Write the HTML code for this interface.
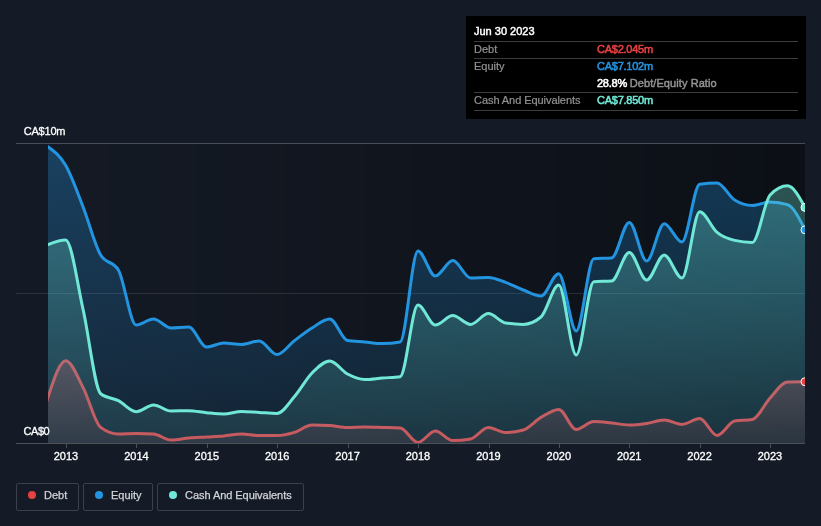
<!DOCTYPE html>
<html><head><meta charset="utf-8"><title>Debt to Equity History</title>
<style>
html,body{margin:0;padding:0;background:#151b26;}
body{width:821px;height:526px;position:relative;overflow:hidden;font-family:"Liberation Sans",Arial,sans-serif;font-size:11px;color:#fff;}
svg{position:absolute;left:0;top:0;will-change:transform;}
.tip,.legend{will-change:transform;}
.tip{position:absolute;left:466px;top:16px;width:324px;height:87px;padding:8px;background:#000;}
.tip .row{height:16px;line-height:17px;border-bottom:1px solid #3c3c3c;position:relative;white-space:nowrap;}
.tip .row.nb{border-bottom:none;height:17px;}
.tip .title{color:#fff;height:17px;line-height:18px;-webkit-text-stroke:0.45px #fff;}
.tip .title span{position:relative;top:-2px;}
.tip .lab{color:#939393;position:relative;top:-1px;-webkit-text-stroke:0.2px #939393;}
.tip .val{position:absolute;left:123px;top:-1px;letter-spacing:-0.25px;-webkit-text-stroke:0.55px;}
.legend{position:absolute;top:483px;height:26px;border:1px solid #3b404b;border-radius:2px;box-sizing:content-box;color:#d2d4d8;line-height:23px;white-space:nowrap;}
.legend i{position:absolute;left:11px;top:7px;width:8px;height:8px;border-radius:4px;}
.legend span{position:absolute;left:27px;top:0;-webkit-text-stroke:0.25px #d2d4d8;}
</style></head><body>
<svg width="821" height="526" viewBox="0 0 821 526">
<defs>
<linearGradient id="pbg" x1="0" y1="0" x2="1" y2="0"><stop offset="0" stop-color="#000" stop-opacity="0"/><stop offset="1" stop-color="#000" stop-opacity="0.42"/></linearGradient>
<linearGradient id="gd" x1="0" y1="0" x2="0" y2="1"><stop offset="0" stop-color="#e64141" stop-opacity="0.32"/><stop offset="1" stop-color="#e64141" stop-opacity="0.1"/></linearGradient>
<linearGradient id="ge" x1="0" y1="0" x2="0" y2="1"><stop offset="0" stop-color="#2394df" stop-opacity="0.32"/><stop offset="1" stop-color="#2394df" stop-opacity="0.1"/></linearGradient>
<linearGradient id="gc" x1="0" y1="0" x2="0" y2="1"><stop offset="0" stop-color="#71e7d6" stop-opacity="0.32"/><stop offset="1" stop-color="#71e7d6" stop-opacity="0.1"/></linearGradient>
<clipPath id="cp"><rect x="48" y="140" width="757" height="303"/></clipPath>
</defs>
<rect x="16" y="144" width="789" height="299" fill="url(#pbg)"/>
<g stroke="#fff" stroke-width="1" shape-rendering="crispEdges">
<line x1="16" y1="143.5" x2="805" y2="143.5" stroke-opacity="0.22"/>
<line x1="16" y1="293.5" x2="805" y2="293.5" stroke-opacity="0.11"/>
</g>
<g clip-path="url(#cp)">
<path d="M48.00,397.40C53.91,379.05,59.83,360.70,65.74,360.70C71.53,360.70,77.32,376.57,83.10,387.60C88.95,398.75,94.80,423.05,100.65,427.40C106.57,431.80,112.48,434.00,118.40,434.00C124.31,434.00,130.23,433.40,136.14,433.40C141.93,433.40,147.71,433.60,153.50,434.00C159.35,434.40,165.20,440.00,171.05,440.00C176.96,440.00,182.88,438.50,188.79,438.00C194.71,437.50,200.62,437.34,206.54,437.00C212.32,436.67,218.11,436.50,223.89,436.00C229.74,435.50,235.59,434.00,241.44,434.00C247.36,434.00,253.27,435.60,259.19,435.60C265.10,435.60,271.02,435.60,276.93,435.60C282.78,435.60,288.63,434.17,294.48,432.40C300.33,430.63,306.18,425.00,312.03,425.00C317.95,425.00,323.86,425.20,329.78,425.60C335.69,426.00,341.61,427.60,347.52,427.60C353.31,427.60,359.09,427.00,364.88,427.00C370.73,427.00,376.58,427.23,382.43,427.40C388.34,427.57,394.26,427.60,400.17,428.00C406.09,428.40,412.00,442.40,417.92,442.40C423.70,442.40,429.49,431.00,435.28,431.00C441.13,431.00,446.98,440.60,452.83,440.60C458.74,440.60,464.66,440.07,470.57,439.00C476.48,437.93,482.40,427.40,488.31,427.40C494.10,427.40,499.89,432.60,505.67,432.60C511.52,432.60,517.37,431.73,523.22,430.00C529.14,428.25,535.05,420.83,540.97,417.40C546.88,413.97,552.80,409.40,558.71,409.40C564.56,409.40,570.41,429.40,576.26,429.40C582.11,429.40,587.96,421.60,593.81,421.60C599.73,421.60,605.64,422.43,611.56,423.00C617.47,423.57,623.38,425.00,629.30,425.00C635.08,425.00,640.87,424.23,646.66,423.40C652.51,422.57,658.36,420.00,664.21,420.00C670.12,420.00,676.04,424.40,681.95,424.40C687.87,424.40,693.78,418.60,699.70,418.60C705.48,418.60,711.27,435.40,717.05,435.40C722.90,435.40,728.75,422.06,734.60,421.00C740.52,419.93,746.43,420.47,752.35,419.40C758.26,418.33,764.18,404.28,770.09,398.00C775.88,391.85,781.66,382.20,787.45,382.00C793.30,381.80,799.15,381.75,805.00,381.70L805.00,443L48.00,443Z" fill="url(#gd)"/>
<path d="M45.00,406.71 L48.00,397.40C53.91,379.05,59.83,360.70,65.74,360.70C71.53,360.70,77.32,376.57,83.10,387.60C88.95,398.75,94.80,423.05,100.65,427.40C106.57,431.80,112.48,434.00,118.40,434.00C124.31,434.00,130.23,433.40,136.14,433.40C141.93,433.40,147.71,433.60,153.50,434.00C159.35,434.40,165.20,440.00,171.05,440.00C176.96,440.00,182.88,438.50,188.79,438.00C194.71,437.50,200.62,437.34,206.54,437.00C212.32,436.67,218.11,436.50,223.89,436.00C229.74,435.50,235.59,434.00,241.44,434.00C247.36,434.00,253.27,435.60,259.19,435.60C265.10,435.60,271.02,435.60,276.93,435.60C282.78,435.60,288.63,434.17,294.48,432.40C300.33,430.63,306.18,425.00,312.03,425.00C317.95,425.00,323.86,425.20,329.78,425.60C335.69,426.00,341.61,427.60,347.52,427.60C353.31,427.60,359.09,427.00,364.88,427.00C370.73,427.00,376.58,427.23,382.43,427.40C388.34,427.57,394.26,427.60,400.17,428.00C406.09,428.40,412.00,442.40,417.92,442.40C423.70,442.40,429.49,431.00,435.28,431.00C441.13,431.00,446.98,440.60,452.83,440.60C458.74,440.60,464.66,440.07,470.57,439.00C476.48,437.93,482.40,427.40,488.31,427.40C494.10,427.40,499.89,432.60,505.67,432.60C511.52,432.60,517.37,431.73,523.22,430.00C529.14,428.25,535.05,420.83,540.97,417.40C546.88,413.97,552.80,409.40,558.71,409.40C564.56,409.40,570.41,429.40,576.26,429.40C582.11,429.40,587.96,421.60,593.81,421.60C599.73,421.60,605.64,422.43,611.56,423.00C617.47,423.57,623.38,425.00,629.30,425.00C635.08,425.00,640.87,424.23,646.66,423.40C652.51,422.57,658.36,420.00,664.21,420.00C670.12,420.00,676.04,424.40,681.95,424.40C687.87,424.40,693.78,418.60,699.70,418.60C705.48,418.60,711.27,435.40,717.05,435.40C722.90,435.40,728.75,422.06,734.60,421.00C740.52,419.93,746.43,420.47,752.35,419.40C758.26,418.33,764.18,404.28,770.09,398.00C775.88,391.85,781.66,382.20,787.45,382.00C793.30,381.80,799.15,381.75,805.00,381.70" fill="none" stroke="#e64141" stroke-width="3" stroke-linejoin="round"/>
<path d="M48.00,146.80C53.91,151.03,59.83,155.27,65.74,165.50C71.53,175.51,77.32,192.18,83.10,207.00C88.95,221.99,94.80,245.11,100.65,255.00C106.57,265.00,112.48,260.00,118.40,270.00C124.31,280.00,130.23,325.00,136.14,325.00C141.93,325.00,147.71,319.00,153.50,319.00C159.35,319.00,165.20,328.00,171.05,328.00C176.96,328.00,182.88,327.00,188.79,327.00C194.71,327.00,200.62,347.00,206.54,347.00C212.32,347.00,218.11,343.00,223.89,343.00C229.74,343.00,235.59,344.40,241.44,344.40C247.36,344.40,253.27,341.00,259.19,341.00C265.10,341.00,271.02,354.60,276.93,354.60C282.78,354.60,288.63,345.03,294.48,340.60C300.33,336.17,306.18,331.59,312.03,328.00C317.95,324.37,323.86,319.00,329.78,319.00C335.69,319.00,341.61,339.65,347.52,340.60C353.31,341.53,359.09,341.50,364.88,342.00C370.73,342.50,376.58,343.60,382.43,343.60C388.34,343.60,394.26,343.07,400.17,342.00C406.09,340.93,412.00,251.00,417.92,251.00C423.70,251.00,429.49,276.00,435.28,276.00C441.13,276.00,446.98,260.50,452.83,260.50C458.74,260.50,464.66,278.00,470.57,278.00C476.48,278.00,482.40,277.40,488.31,277.40C494.10,277.40,499.89,280.32,505.67,282.40C511.52,284.51,517.37,287.74,523.22,290.00C529.14,292.28,535.05,296.00,540.97,296.00C546.88,296.00,552.80,273.70,558.71,273.70C564.56,273.70,570.41,331.00,576.26,331.00C582.11,331.00,587.96,259.16,593.81,258.70C599.73,258.23,605.64,258.47,611.56,258.00C617.47,257.53,623.38,222.40,629.30,222.40C635.08,222.40,640.87,261.00,646.66,261.00C652.51,261.00,658.36,223.70,664.21,223.70C670.12,223.70,676.04,242.00,681.95,242.00C687.87,242.00,693.78,185.02,699.70,184.20C705.48,183.40,711.27,183.00,717.05,183.00C722.90,183.00,728.75,196.37,734.60,200.00C740.52,203.67,746.43,205.50,752.35,205.50C758.26,205.50,764.18,202.00,770.09,202.00C775.88,202.00,781.66,202.87,787.45,204.60C793.30,206.35,799.15,218.08,805.00,229.80L805.00,443L48.00,443Z" fill="url(#ge)"/>
<path d="M45.00,144.65 L48.00,146.80C53.91,151.03,59.83,155.27,65.74,165.50C71.53,175.51,77.32,192.18,83.10,207.00C88.95,221.99,94.80,245.11,100.65,255.00C106.57,265.00,112.48,260.00,118.40,270.00C124.31,280.00,130.23,325.00,136.14,325.00C141.93,325.00,147.71,319.00,153.50,319.00C159.35,319.00,165.20,328.00,171.05,328.00C176.96,328.00,182.88,327.00,188.79,327.00C194.71,327.00,200.62,347.00,206.54,347.00C212.32,347.00,218.11,343.00,223.89,343.00C229.74,343.00,235.59,344.40,241.44,344.40C247.36,344.40,253.27,341.00,259.19,341.00C265.10,341.00,271.02,354.60,276.93,354.60C282.78,354.60,288.63,345.03,294.48,340.60C300.33,336.17,306.18,331.59,312.03,328.00C317.95,324.37,323.86,319.00,329.78,319.00C335.69,319.00,341.61,339.65,347.52,340.60C353.31,341.53,359.09,341.50,364.88,342.00C370.73,342.50,376.58,343.60,382.43,343.60C388.34,343.60,394.26,343.07,400.17,342.00C406.09,340.93,412.00,251.00,417.92,251.00C423.70,251.00,429.49,276.00,435.28,276.00C441.13,276.00,446.98,260.50,452.83,260.50C458.74,260.50,464.66,278.00,470.57,278.00C476.48,278.00,482.40,277.40,488.31,277.40C494.10,277.40,499.89,280.32,505.67,282.40C511.52,284.51,517.37,287.74,523.22,290.00C529.14,292.28,535.05,296.00,540.97,296.00C546.88,296.00,552.80,273.70,558.71,273.70C564.56,273.70,570.41,331.00,576.26,331.00C582.11,331.00,587.96,259.16,593.81,258.70C599.73,258.23,605.64,258.47,611.56,258.00C617.47,257.53,623.38,222.40,629.30,222.40C635.08,222.40,640.87,261.00,646.66,261.00C652.51,261.00,658.36,223.70,664.21,223.70C670.12,223.70,676.04,242.00,681.95,242.00C687.87,242.00,693.78,185.02,699.70,184.20C705.48,183.40,711.27,183.00,717.05,183.00C722.90,183.00,728.75,196.37,734.60,200.00C740.52,203.67,746.43,205.50,752.35,205.50C758.26,205.50,764.18,202.00,770.09,202.00C775.88,202.00,781.66,202.87,787.45,204.60C793.30,206.35,799.15,218.08,805.00,229.80" fill="none" stroke="#2394df" stroke-width="3" stroke-linejoin="round"/>
<path d="M48.00,244.50C53.91,242.25,59.83,240.00,65.74,240.00C71.53,240.00,77.32,284.05,83.10,309.50C88.95,335.23,94.80,389.08,100.65,393.70C106.57,398.37,112.48,397.70,118.40,400.70C124.31,403.70,130.23,411.70,136.14,411.70C141.93,411.70,147.71,405.00,153.50,405.00C159.35,405.00,165.20,411.00,171.05,411.00C176.96,411.00,182.88,410.70,188.79,410.70C194.71,410.70,200.62,412.15,206.54,412.70C212.32,413.24,218.11,414.00,223.89,414.00C229.74,414.00,235.59,411.40,241.44,411.40C247.36,411.40,253.27,412.07,259.19,412.40C265.10,412.73,271.02,413.40,276.93,413.40C282.78,413.40,288.63,403.23,294.48,396.50C300.33,389.77,306.18,378.91,312.03,373.00C317.95,367.03,323.86,361.00,329.78,361.00C335.69,361.00,341.61,370.91,347.52,374.00C353.31,377.02,359.09,379.50,364.88,379.50C370.73,379.50,376.58,378.46,382.43,378.00C388.34,377.53,394.26,377.57,400.17,376.70C406.09,375.83,412.00,305.00,417.92,305.00C423.70,305.00,429.49,325.00,435.28,325.00C441.13,325.00,446.98,315.60,452.83,315.60C458.74,315.60,464.66,324.40,470.57,324.40C476.48,324.40,482.40,313.60,488.31,313.60C494.10,313.60,499.89,322.08,505.67,323.00C511.52,323.93,517.37,324.40,523.22,324.40C529.14,324.40,535.05,321.93,540.97,317.00C546.88,312.07,552.80,285.00,558.71,285.00C564.56,285.00,570.41,355.00,576.26,355.00C582.11,355.00,587.96,282.16,593.81,281.70C599.73,281.23,605.64,281.47,611.56,281.00C617.47,280.53,623.38,252.50,629.30,252.50C635.08,252.50,640.87,280.00,646.66,280.00C652.51,280.00,658.36,255.00,664.21,255.00C670.12,255.00,676.04,278.00,681.95,278.00C687.87,278.00,693.78,211.70,699.70,211.70C705.48,211.70,711.27,227.62,717.05,232.40C722.90,237.23,728.75,239.08,734.60,240.40C740.52,241.73,746.43,242.40,752.35,242.40C758.26,242.40,764.18,201.27,770.09,195.00C775.88,188.87,781.66,185.80,787.45,185.80C793.30,185.80,799.15,196.60,805.00,207.40L805.00,443L48.00,443Z" fill="url(#gc)"/>
<path d="M45.00,245.64 L48.00,244.50C53.91,242.25,59.83,240.00,65.74,240.00C71.53,240.00,77.32,284.05,83.10,309.50C88.95,335.23,94.80,389.08,100.65,393.70C106.57,398.37,112.48,397.70,118.40,400.70C124.31,403.70,130.23,411.70,136.14,411.70C141.93,411.70,147.71,405.00,153.50,405.00C159.35,405.00,165.20,411.00,171.05,411.00C176.96,411.00,182.88,410.70,188.79,410.70C194.71,410.70,200.62,412.15,206.54,412.70C212.32,413.24,218.11,414.00,223.89,414.00C229.74,414.00,235.59,411.40,241.44,411.40C247.36,411.40,253.27,412.07,259.19,412.40C265.10,412.73,271.02,413.40,276.93,413.40C282.78,413.40,288.63,403.23,294.48,396.50C300.33,389.77,306.18,378.91,312.03,373.00C317.95,367.03,323.86,361.00,329.78,361.00C335.69,361.00,341.61,370.91,347.52,374.00C353.31,377.02,359.09,379.50,364.88,379.50C370.73,379.50,376.58,378.46,382.43,378.00C388.34,377.53,394.26,377.57,400.17,376.70C406.09,375.83,412.00,305.00,417.92,305.00C423.70,305.00,429.49,325.00,435.28,325.00C441.13,325.00,446.98,315.60,452.83,315.60C458.74,315.60,464.66,324.40,470.57,324.40C476.48,324.40,482.40,313.60,488.31,313.60C494.10,313.60,499.89,322.08,505.67,323.00C511.52,323.93,517.37,324.40,523.22,324.40C529.14,324.40,535.05,321.93,540.97,317.00C546.88,312.07,552.80,285.00,558.71,285.00C564.56,285.00,570.41,355.00,576.26,355.00C582.11,355.00,587.96,282.16,593.81,281.70C599.73,281.23,605.64,281.47,611.56,281.00C617.47,280.53,623.38,252.50,629.30,252.50C635.08,252.50,640.87,280.00,646.66,280.00C652.51,280.00,658.36,255.00,664.21,255.00C670.12,255.00,676.04,278.00,681.95,278.00C687.87,278.00,693.78,211.70,699.70,211.70C705.48,211.70,711.27,227.62,717.05,232.40C722.90,237.23,728.75,239.08,734.60,240.40C740.52,241.73,746.43,242.40,752.35,242.40C758.26,242.40,764.18,201.27,770.09,195.00C775.88,188.87,781.66,185.80,787.45,185.80C793.30,185.80,799.15,196.60,805.00,207.40" fill="none" stroke="#71e7d6" stroke-width="3" stroke-linejoin="round"/>
<circle cx="805" cy="381.7" r="4" fill="#e64141" stroke="#fff" stroke-width="1"/>
<circle cx="805" cy="229.8" r="4" fill="#2394df" stroke="#fff" stroke-width="1"/>
<circle cx="805" cy="207.4" r="4" fill="#71e7d6" stroke="#fff" stroke-width="1"/>
</g>
<g stroke="#fff" stroke-width="1" shape-rendering="crispEdges">
<line x1="16" y1="443.5" x2="805" y2="443.5" stroke-opacity="0.24"/>
</g>
<g stroke="#fff" stroke-opacity="0.24" stroke-width="1" shape-rendering="crispEdges">
<line x1="66.5" y1="444" x2="66.5" y2="448"/><line x1="136.5" y1="444" x2="136.5" y2="448"/><line x1="207.5" y1="444" x2="207.5" y2="448"/><line x1="277.5" y1="444" x2="277.5" y2="448"/><line x1="348.5" y1="444" x2="348.5" y2="448"/><line x1="418.5" y1="444" x2="418.5" y2="448"/><line x1="489.5" y1="444" x2="489.5" y2="448"/><line x1="559.5" y1="444" x2="559.5" y2="448"/><line x1="629.5" y1="444" x2="629.5" y2="448"/><line x1="700.5" y1="444" x2="700.5" y2="448"/><line x1="770.5" y1="444" x2="770.5" y2="448"/>
</g>
<g font-family="Liberation Sans, Arial, sans-serif" font-size="11" fill="#fff" stroke="#fff" stroke-width="0.3">
<text x="23.7" y="135" letter-spacing="-0.2">CA$10m</text>
<text x="23.5" y="435" letter-spacing="-0.45">CA$0</text>
<g text-anchor="middle">
<text x="66" y="460">2013</text><text x="136.4" y="460">2014</text><text x="206.8" y="460">2015</text><text x="277.2" y="460">2016</text><text x="347.6" y="460">2017</text><text x="418" y="460">2018</text><text x="488.4" y="460">2019</text><text x="558.8" y="460">2020</text><text x="629.2" y="460">2021</text><text x="699.6" y="460">2022</text><text x="770" y="460">2023</text>
</g></g>
</svg>
<div class="tip">
<div class="row title"><span>Jun 30 2023</span></div>
<div class="row"><span class="lab">Debt</span><span class="val" style="color:#e64141">CA$2.045m</span></div>
<div class="row nb"><span class="lab">Equity</span><span class="val" style="color:#2394df">CA$7.102m</span></div>
<div class="row"><span class="val" style="color:#fff">28.8% <span style="color:#939393;-webkit-text-stroke:0.45px #939393;letter-spacing:0.08px;">Debt/Equity Ratio</span></span></div>
<div class="row" style="height:17px"><span class="lab" style="letter-spacing:-0.06px">Cash And Equivalents</span><span class="val" style="color:#71e7d6">CA$7.850m</span></div>
</div>
<div class="legend" style="left:16px;width:61px;"><i style="background:#e64141"></i><span>Debt</span></div>
<div class="legend" style="left:83px;width:68px;"><i style="background:#2394df"></i><span>Equity</span></div>
<div class="legend" style="left:157px;width:145px;"><i style="background:#71e7d6"></i><span style="letter-spacing:-0.05px">Cash And Equivalents</span></div>
</body></html>
